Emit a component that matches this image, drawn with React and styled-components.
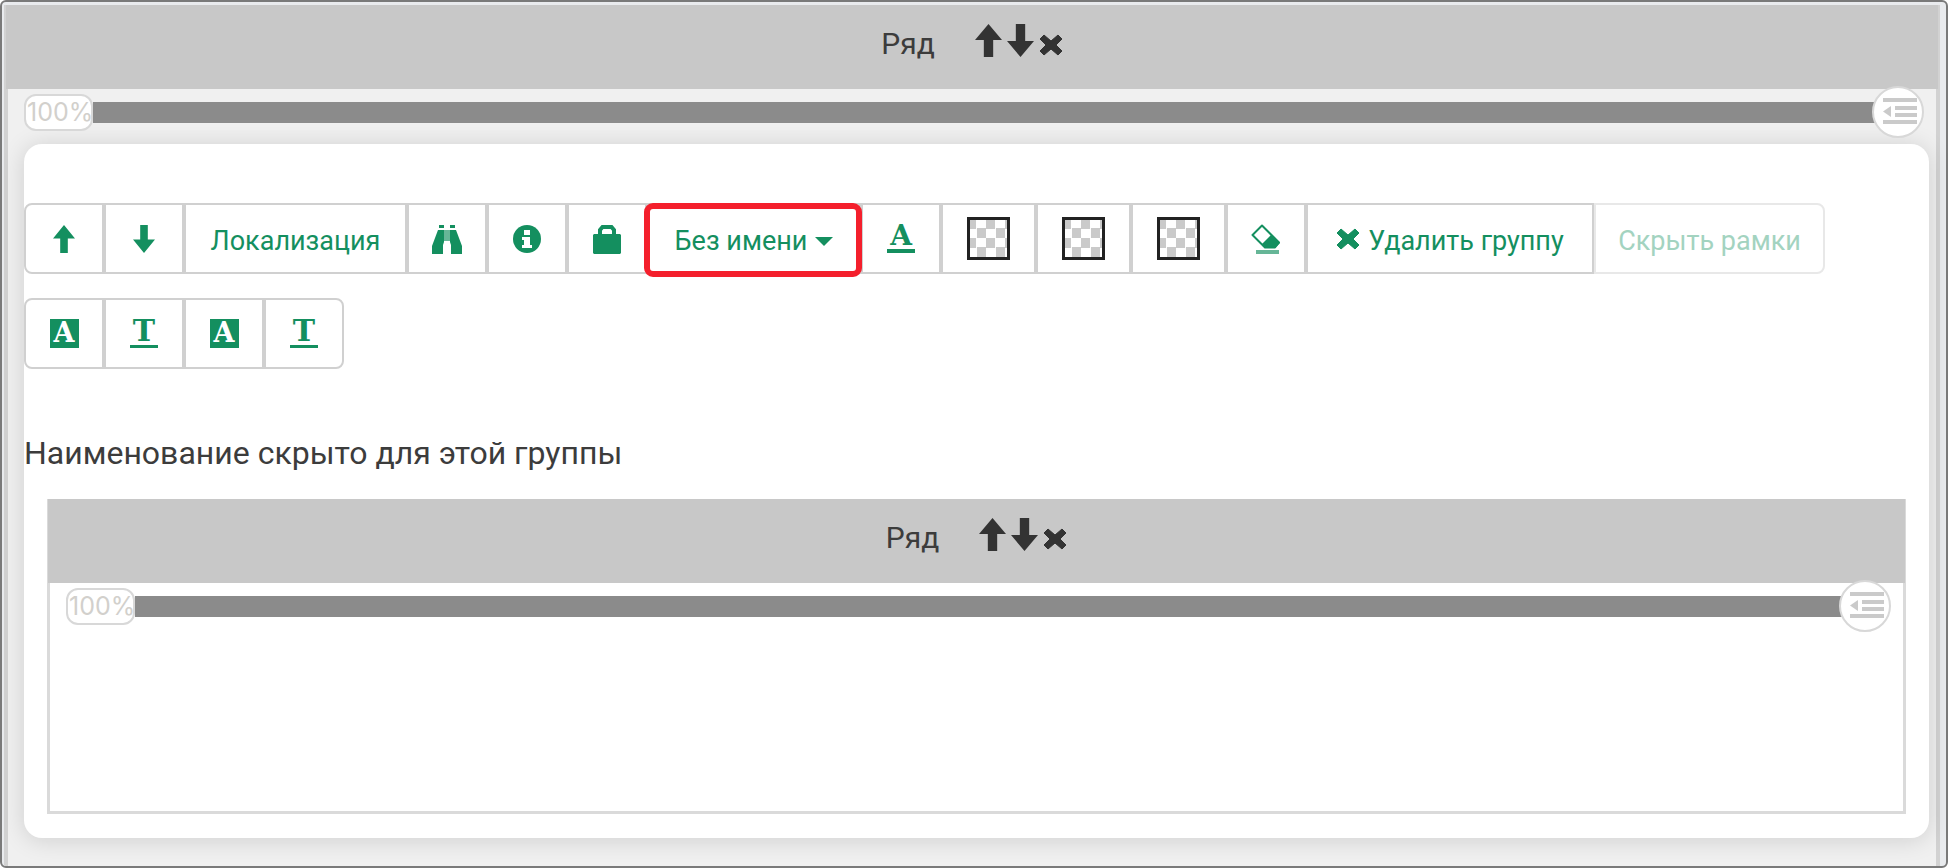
import React from 'react';
import styled, { createGlobalStyle } from 'styled-components';

const GlobalStyle = createGlobalStyle`
  * {
    box-sizing: border-box;
  }
  body {
    margin: 0;
    background: #fff;
    color: #3c3c3c;
    font-family: Roboto, "Liberation Sans", sans-serif;
    font-size: 30px;
    line-height: 36px;
  }
  button {
    margin: 0;
    padding: 0;
    font: inherit;
    color: inherit;
    cursor: pointer;
  }
  svg {
    display: block;
    fill: currentColor;
  }
`;

const Window = styled.main`
  display: flex;
  min-height: 100vh;
  padding: 3px 6px 0 2px;
  background: #e9ebee;
  border: 2px solid #7a7a7a;
  border-radius: 6px;
`;

const OuterRow = styled.section`
  flex: 1;
  min-width: 0;
  border: solid #d2d2d2;
  border-width: 0 4px;
  background: #f0f0f0;
`;

const InnerRow = styled.section`
  min-height: 315px;
  margin: 0 23px;
  border: 3px solid #dadada;
  border-top: 0;
  background: #fff;
`;

const RowHeader = styled.header`
  display: flex;
  justify-content: center;
  align-items: center;
  height: 84px;
  margin: 0 -2px;
  padding-bottom: 14px;
  background: #c8c8c8;
`;

const RowName = styled.span`
  margin-right: 40px;
  padding-top: 7px;
`;

const RowActions = styled.div`
  display: flex;
  gap: 5px;
`;

const RowButton = styled.button`
  display: flex;
  height: 33px;
  align-items: flex-end;
  border: 0;
  background: none;
  color: #333;
`;

const SliderRow = styled.div`
  display: flex;
  align-items: center;
  height: 46px;
  padding: 0 12px 0 16px;
`;

const Percent = styled.button`
  z-index: 1;
  flex: none;
  width: 69px;
  height: 37px;
  padding-left: 1px;
  border: 2px solid #d8d8d8;
  border-radius: 12px;
  background: #fff;
  color: #d2d0cc;
  font-family: Inter, "Liberation Sans", sans-serif;
  font-size: 25px;
  line-height: 33px;
  text-align: left;
  white-space: nowrap;
`;

const Track = styled.div`
  flex: 1;
  height: 21px;
  margin-right: -4px;
  background: #8b8b8b;
`;

const OutdentButton = styled.button`
  display: flex;
  flex: none;
  align-items: center;
  justify-content: center;
  width: 52px;
  height: 52px;
  margin: -3px 0;
  padding-left: 4px;
  border: 2px solid #d8d8d8;
  border-radius: 50%;
  background: #fff;
  color: #cacaca;
`;

const Card = styled.section`
  margin: 9px 7px 26px 16px;
  padding: 59px 0 24px;
  border-radius: 18px;
  background: #fff;
  box-shadow: 0 2px 24px rgba(0, 0, 0, 0.14);
`;

const Toolbar = styled.div`
  display: flex;
  flex-wrap: wrap;
  gap: 24px;
`;

const ButtonGroup = styled.div`
  display: flex;

  > :first-child {
    border-radius: 8px 0 0 8px;
  }
  > :last-child {
    border-radius: 0 8px 8px 0;
  }
`;

const ToolButton = styled.button`
  position: relative;
  display: flex;
  justify-content: center;
  align-items: center;
  gap: 8px;
  min-width: ${props => props.$width || 80}px;
  height: 71px;
  border: 2px solid #d0d0d0;
  background: #fff;
  color: #148f5f;
  font-size: 27px;
  white-space: nowrap;

  &:disabled {
    border-color: #e8e8e8;
    color: #a3d3c0;
    cursor: default;
  }
`;

const MarkedButton = styled(ToolButton)`
  &::after {
    content: "";
    position: absolute;
    z-index: 1;
    inset: -2px -3px -5px -5px;
    border: 6px solid #f41f2c;
    border-radius: 9px;
  }
`;

const Label = styled.span`
  padding-top: 5px;
`;

const Letter = styled.span`
  width: 28px;
  height: 29px;
  border-bottom: ${props => props.$line || 4}px solid currentColor;
  font-family: "DejaVu Serif", serif;
  font-size: ${props => props.$size || 28}px;
  font-weight: 700;
  line-height: 24px;
  text-align: center;
`;

const BoxedLetter = styled.span`
  width: 29px;
  height: 29px;
  background: #148f5f;
  color: #fff;
  font-family: "DejaVu Serif", serif;
  font-size: 27px;
  font-weight: 700;
  line-height: 28px;
  text-align: center;
`;

const Swatch = styled.span`
  width: 43px;
  height: 43px;
  border: 3px solid #222;
  background: repeating-conic-gradient(#fff 0 25%, #cacaca 0 50%) -3px -1px / 19px 19px;
`;

const Caption = styled.p`
  margin: 66px 0 28px;
  font-size: 32px;
`;

function ArrowUp({ width = 22, height = 28 }) {
  return (
    <svg width={width} height={height} viewBox="0 0 26 33" preserveAspectRatio="none" aria-hidden="true">
      <path d="M13 0L26 16H17.500V33H8.500V16H0Z" />
    </svg>
  );
}

function ArrowDown({ width = 22, height = 28 }) {
  return (
    <svg width={width} height={height} viewBox="0 0 26 33" preserveAspectRatio="none" aria-hidden="true">
      <path d="M13 33L26 17H17.500V0H8.500V17H0Z" />
    </svg>
  );
}

function Cross() {
  return (
    <svg width="24" height="24" viewBox="0 0 24 24" aria-hidden="true">
      <path
        d="M5 2L12 8L19 2L23 6L17 12L23 18L19 22L12 16L5 22L1 18L7 12L1 6Z"
        stroke="currentColor"
        strokeLinejoin="round"
      />
    </svg>
  );
}

function Binoculars() {
  return (
    <svg width="30" height="30" viewBox="0 0 30 30" aria-hidden="true">
      <path d="M7 1H12V4H7ZM18 1H23V4H18ZM6 6H12V18L11 21V30H0V22ZM18 6H24L30 22V30H19V21L18 18Z" />
      <path d="M12 6H18V17H12Z" opacity=".65" />
    </svg>
  );
}

function Info() {
  return (
    <svg width="30" height="30" viewBox="0 0 30 30" aria-hidden="true">
      <circle cx="15" cy="15" r="14" />
      <path d="M12 6H18V11H12ZM10 13H18V21H20V24H10V21H12V16H10Z" fill="#fff" />
    </svg>
  );
}

function Lock() {
  return (
    <svg width="28" height="30" viewBox="0 0 28 30" aria-hidden="true">
      <path d="M7 12V6L9.500 3H18.500L21 6V12" fill="none" stroke="currentColor" strokeWidth="4" />
      <path d="M1 10H27L28 11V29L27 30H1L0 29V11Z" />
    </svg>
  );
}

function Eraser() {
  return (
    <svg width="30" height="30" viewBox="0 0 30 30" aria-hidden="true">
      <path d="M11 1.500L28 18.500L24 23.500H14L1.500 11Z" fill="#fff" stroke="currentColor" strokeWidth="2" strokeLinejoin="round" />
      <path d="M20 11L29 19L24 24H14L11 20Z" />
      <path d="M5 26H28V30H5Z" opacity=".65" />
    </svg>
  );
}

function Caret() {
  return (
    <svg width="18" height="15" viewBox="0 0 18 15" aria-hidden="true">
      <path d="M0 6H18L9 15Z" />
    </svg>
  );
}

function Outdent() {
  return (
    <svg width="34" height="28" viewBox="0 0 34 28" aria-hidden="true">
      <path d="M0 0H34V4H0ZM12 8H34V12H12ZM12 15H34V19H12ZM0 22H34V26H0ZM8 8V19L0 13.500Z" />
    </svg>
  );
}

function RowTop() {
  return (
    <>
      <RowHeader>
        <RowName>Ряд</RowName>
        <RowActions>
          <RowButton aria-label="Вверх"><ArrowUp width={27} height={33} /></RowButton>
          <RowButton aria-label="Вниз"><ArrowDown width={27} height={33} /></RowButton>
          <RowButton aria-label="Удалить ряд"><Cross /></RowButton>
        </RowActions>
      </RowHeader>
      <SliderRow>
        <Percent>100%</Percent>
        <Track />
        <OutdentButton aria-label="Отступ"><Outdent /></OutdentButton>
      </SliderRow>
    </>
  );
}

function App() {
  return (
    <>
      <GlobalStyle />
      <Window>
        <OuterRow>
          <RowTop />
          <Card>
            <Toolbar>
              <ButtonGroup>
                <ToolButton aria-label="Вверх"><ArrowUp /></ToolButton>
                <ToolButton aria-label="Вниз"><ArrowDown /></ToolButton>
                <ToolButton $width={223}><Label>Локализация</Label></ToolButton>
                <ToolButton aria-label="Поиск"><Binoculars /></ToolButton>
                <ToolButton aria-label="Информация"><Info /></ToolButton>
                <ToolButton aria-label="Доступ"><Lock /></ToolButton>
                <MarkedButton $width={214} aria-haspopup="menu"><Label>Без имени</Label><Caret /></MarkedButton>
                <ToolButton aria-label="Цвет текста"><Letter>A</Letter></ToolButton>
                <ToolButton $width={95} aria-label="Цвет 1"><Swatch /></ToolButton>
                <ToolButton $width={95} aria-label="Цвет 2"><Swatch /></ToolButton>
                <ToolButton $width={95} aria-label="Цвет 3"><Swatch /></ToolButton>
                <ToolButton aria-label="Очистить"><Eraser /></ToolButton>
                <ToolButton $width={288}><Cross /><Label>Удалить группу</Label></ToolButton>
                <ToolButton $width={231} disabled><Label>Скрыть рамки</Label></ToolButton>
              </ButtonGroup>
              <ButtonGroup>
                <ToolButton aria-label="Фон"><BoxedLetter>A</BoxedLetter></ToolButton>
                <ToolButton aria-label="Текст"><Letter $line={3} $size={30}>T</Letter></ToolButton>
                <ToolButton aria-label="Фон группы"><BoxedLetter>A</BoxedLetter></ToolButton>
                <ToolButton aria-label="Текст группы"><Letter $line={3} $size={30}>T</Letter></ToolButton>
              </ButtonGroup>
            </Toolbar>
            <Caption>Наименование скрыто для этой группы</Caption>
            <InnerRow>
              <RowTop />
            </InnerRow>
          </Card>
        </OuterRow>
      </Window>
    </>
  );
}

export default App;
